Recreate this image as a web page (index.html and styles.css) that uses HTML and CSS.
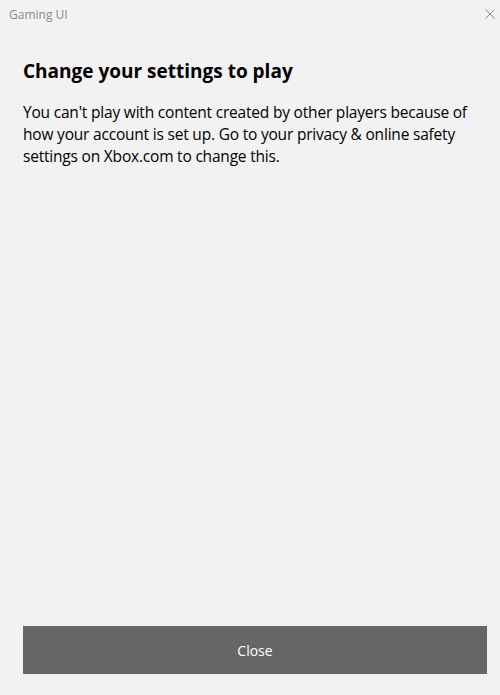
FILE: index.html
```html
<!DOCTYPE html>
<html lang="en">
<head>
<meta charset="utf-8">
<title>Gaming UI</title>
<link rel="stylesheet" href="styles.css">
</head>
<body>
<div class="window">
  <div class="titlebar">
    <span class="app-title">Gaming UI</span>
    <svg class="close-x" width="10" height="10" viewBox="0 0 10 10" aria-hidden="true">
      <path d="M0.5 0.5 L9.5 9.5 M9.5 0.5 L0.5 9.5" stroke="#8a8a8a" stroke-width="1" fill="none"/>
    </svg>
  </div>
  <div class="content">
    <h1 class="heading">Change your settings to play</h1>
    <p class="message">You can't play with content created by other players because of how your account is set up. Go to your privacy &amp; online safety settings on Xbox.com to change this.</p>
  </div>
  <div class="footer">
    <button class="close-btn">Close</button>
  </div>
</div>
</body>
</html>
```
FILE: styles.css
```css
html, body {
  margin: 0;
  padding: 0;
  height: 100%;
  background: #f2f2f2;
  font-family: "Open Sans", "Noto Sans", sans-serif;
}
.window {
  display: flex;
  flex-direction: column;
  height: 695px;
}
.titlebar {
  display: flex;
  align-items: center;
  justify-content: space-between;
  height: 28px;
  padding: 0 5px 0 9px;
}
.app-title {
  font-size: 12px;
  color: #8a8a8a;
}
.close-x {
  display: block;
}
.content {
  flex: 1;
  padding: 0 13px 0 23px;
}
.heading {
  margin: 30px 0 0;
  font-size: 19px;
  line-height: 26px;
  font-weight: 700;
  color: #000;
}
.message {
  margin: 17px 0 0;
  font-size: 15.5px;
  line-height: 22px;
  letter-spacing: -0.2px;
  color: #000;
}
.footer {
  padding: 0 13px 21px 23px;
}
.close-btn {
  display: block;
  width: 100%;
  height: 48px;
  border: none;
  background: #666666;
  color: #ffffff;
  font-family: "Open Sans", "Noto Sans", sans-serif;
  font-size: 14px;
  padding: 0;
}
```
